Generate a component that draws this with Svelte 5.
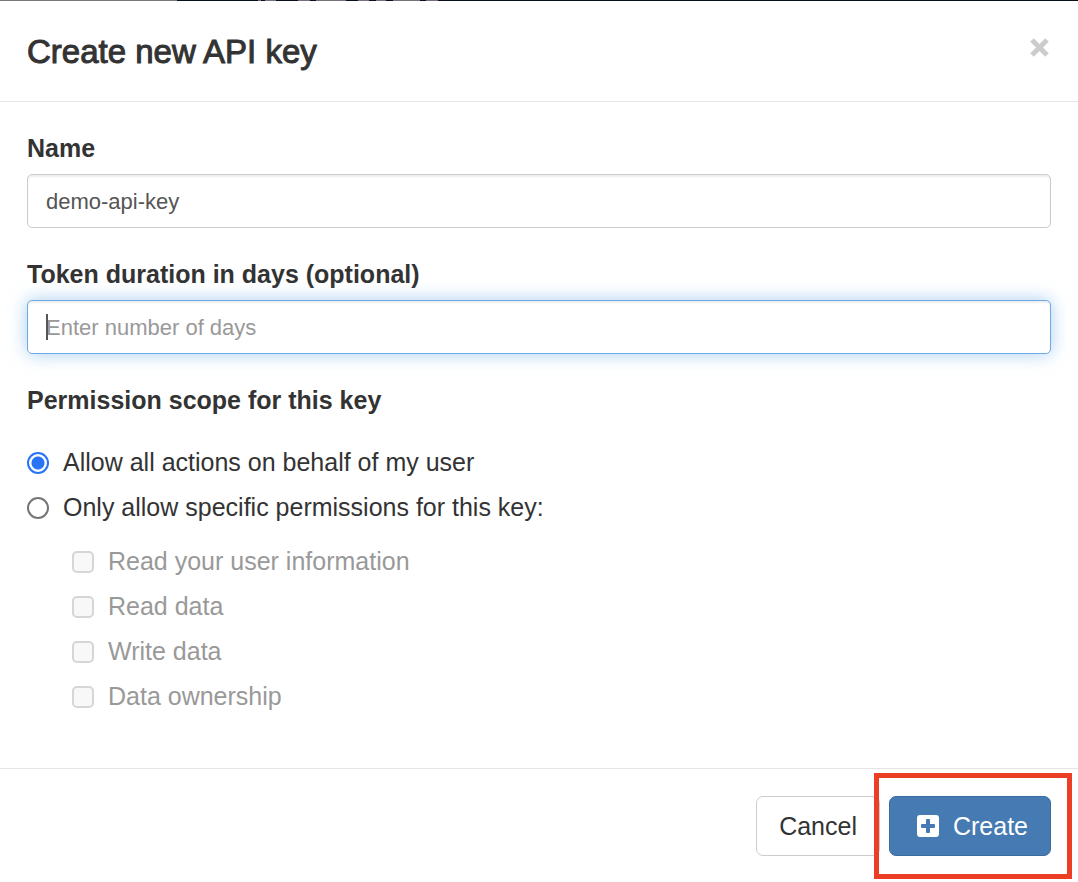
<script lang="ts">
  let name = $state("demo-api-key");
  let duration = $state("");
  let scope = $state("all");
  let selected = $state<string[]>([]);

  const permissions = [
    { id: "user", label: "Read your user information" },
    { id: "read", label: "Read data" },
    { id: "write", label: "Write data" },
    { id: "owner", label: "Data ownership" },
  ];
</script>

<div class="modal" role="dialog" aria-labelledby="modal-title">
  <header class="modal-header">
    <h1 id="modal-title">Create new API key</h1>
    <button type="button" class="close" aria-label="Close">
      <svg viewBox="0 0 22 22" width="22" height="22">
        <path d="M3 3L18 18M18 3L3 18" stroke="currentColor" stroke-width="5" />
      </svg>
    </button>
  </header>

  <form class="modal-body">
    <div class="form-group">
      <label class="title" for="key-name">Name</label>
      <input id="key-name" class="form-control" type="text" bind:value={name} />
    </div>

    <div class="form-group">
      <label class="title" for="key-duration">Token duration in days (optional)</label>
      <div class="field">
        <input
          id="key-duration"
          class="form-control active"
          type="text"
          placeholder="Enter number of days"
          bind:value={duration}
        />
        {#if !duration}
          <span class="caret"></span>
        {/if}
      </div>
    </div>

    <fieldset>
      <legend class="title">Permission scope for this key</legend>
      <label class="option">
        <input type="radio" name="scope" value="all" bind:group={scope} />
        Allow all actions on behalf of my user
      </label>
      <label class="option">
        <input type="radio" name="scope" value="specific" bind:group={scope} />
        Only allow specific permissions for this key:
      </label>

      <div class="permissions">
        {#each permissions as permission (permission.id)}
          <label class="option" class:disabled={scope === "all"}>
            <input
              type="checkbox"
              value={permission.id}
              disabled={scope === "all"}
              bind:group={selected}
            />
            {permission.label}
          </label>
        {/each}
      </div>
    </fieldset>
  </form>

  <footer class="modal-footer">
    <button type="button" class="btn">Cancel</button>
    <div class="highlighted">
      <button type="button" class="btn primary">
        <svg viewBox="0 0 22 22" width="22" height="22">
          <path
            fill="currentColor"
            fill-rule="evenodd"
            d="M3 0H19A3 3 0 0 1 22 3V19A3 3 0 0 1 19 22H3A3 3 0 0 1 0 19V3A3 3 0 0 1 3 0ZM10 4Q9 4 9 5V9H5Q4 9 4 10V12Q4 13 5 13H9V17Q9 18 10 18H12Q13 18 13 17V13H17Q18 13 18 12V10Q18 9 17 9H13V5Q13 4 12 4Z"
          />
        </svg>
        Create
      </button>
    </div>
  </footer>
</div>

<style>
  :global(body) {
    margin: 0;
    background: #fff;
  }

  .modal {
    box-sizing: border-box;
    color: #333;
    font: 25px/39px "Helvetica Neue", Helvetica, "Liberation Sans", Arial, sans-serif;
  }

  /* sliver of the page behind the dialog */
  .modal::before {
    content: "";
    display: block;
    height: 1px;
    background: linear-gradient(
      90deg,
      #777 0 177px,
      #07101d 177px 258px,
      #777079 258px 261px,
      #07101d 261px 265px,
      #777079 265px 276px,
      #07101d 276px 298px,
      #777079 298px 310px,
      #07101d 310px 316px,
      #777079 316px 346px,
      #07101d 346px 358px,
      #777079 358px 369px,
      #07101d 369px 376px,
      #777079 376px 386px,
      #07101d 386px 393px,
      #777079 393px 420px,
      #07101d 420px 426px,
      #777079 426px 438px,
      #07101d 438px
    );
  }

  .modal-header {
    display: flex;
    justify-content: space-between;
    align-items: center;
    height: 100px;
    padding: 0 27px;
    border-bottom: 1px solid #e5e5e5;
  }

  h1 {
    margin: 0;
    font-size: 33px;
    font-weight: 400;
    -webkit-text-stroke: 1px #333;
  }

  .close {
    display: flex;
    align-self: flex-start;
    margin-top: 36px;
    padding: 0;
    border: 0;
    background: none;
    color: #ccc;
  }

  .modal-body {
    padding: 27px 27px 49px;
  }

  .form-group {
    margin-bottom: 27px;
  }

  .title {
    display: block;
    margin-bottom: 6px;
    padding: 0;
    font-weight: 700;
  }

  .field {
    position: relative;
  }

  .form-control {
    display: block;
    box-sizing: border-box;
    width: 100%;
    height: 54px;
    padding: 2px 18px 0;
    border: 1px solid #ccc;
    border-radius: 5px;
    outline: none;
    background: #fff;
    box-shadow: inset 0 2px 2px rgba(0, 0, 0, 0.07);
    color: #555;
    font: inherit;
    font-size: 22px;
  }

  .form-control::placeholder {
    color: #999;
    opacity: 1;
  }

  .form-control.active {
    border-color: #6cabe6;
    box-shadow:
      inset 0 2px 2px rgba(0, 0, 0, 0.07),
      0 0 18px rgba(108, 171, 230, 0.6);
    caret-color: transparent;
  }

  .caret {
    position: absolute;
    top: 14px;
    left: 19px;
    width: 2px;
    height: 26px;
    background: #555;
    pointer-events: none;
  }

  fieldset {
    min-width: 0;
    margin: 0;
    padding: 0;
    border: 0;
  }

  legend.title {
    margin-bottom: 20px;
  }

  .option {
    display: flex;
    align-items: center;
    gap: 14px;
    height: 45px;
  }

  .option input {
    flex: none;
    box-sizing: border-box;
    width: 22px;
    height: 22px;
    margin: 0;
    appearance: none;
    border: 2px solid #767676;
    background: #fff;
  }

  .option input[type="radio"] {
    border-radius: 50%;
  }

  .option input[type="radio"]:checked {
    border-color: #2874f7;
    background: radial-gradient(circle, #2874f7 6px, #fff 7px);
  }

  .option input[type="checkbox"] {
    border-radius: 5px;
  }

  .option input[type="checkbox"]:checked {
    background: #2874f7;
  }

  .option input[type="checkbox"]:disabled {
    border-color: #d6d6d6;
    background: #f8f8f8;
  }

  .permissions {
    margin: 9px 0 0 45px;
  }

  .disabled {
    color: #999;
  }

  .modal-footer {
    display: flex;
    justify-content: flex-end;
    gap: 9px;
    padding: 27px;
    border-top: 1px solid #e5e5e5;
  }

  .btn {
    display: flex;
    align-items: center;
    gap: 14px;
    box-sizing: border-box;
    height: 60px;
    padding: 0 22px;
    border: 1px solid #ccc;
    border-radius: 7px;
    background: #fff;
    color: #333;
    font: inherit;
  }

  .btn.primary {
    padding-left: 27px;
    border-color: #3b6c9e;
    background: #467ab3;
    color: #fff;
  }

  .highlighted {
    position: relative;
  }

  .highlighted::after {
    content: "";
    position: absolute;
    inset: -23px -21px -23px -15px;
    border: 5px solid #ec3e25;
    pointer-events: none;
  }
</style>
